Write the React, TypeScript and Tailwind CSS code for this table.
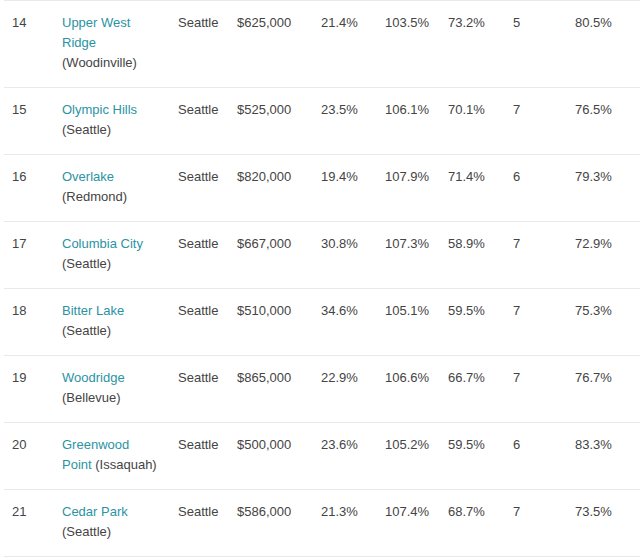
const ROWS = [
  { rank: 14, name: 'Upper West Ridge', area: 'Woodinville', city: 'Seattle', price: '$625,000', a: '21.4%', b: '103.5%', c: '73.2%', d: '5', e: '80.5%' },
  { rank: 15, name: 'Olympic Hills', area: 'Seattle', city: 'Seattle', price: '$525,000', a: '23.5%', b: '106.1%', c: '70.1%', d: '7', e: '76.5%' },
  { rank: 16, name: 'Overlake', area: 'Redmond', city: 'Seattle', price: '$820,000', a: '19.4%', b: '107.9%', c: '71.4%', d: '6', e: '79.3%' },
  { rank: 17, name: 'Columbia City', area: 'Seattle', city: 'Seattle', price: '$667,000', a: '30.8%', b: '107.3%', c: '58.9%', d: '7', e: '72.9%' },
  { rank: 18, name: 'Bitter Lake', area: 'Seattle', city: 'Seattle', price: '$510,000', a: '34.6%', b: '105.1%', c: '59.5%', d: '7', e: '75.3%' },
  { rank: 19, name: 'Woodridge', area: 'Bellevue', city: 'Seattle', price: '$865,000', a: '22.9%', b: '106.6%', c: '66.7%', d: '7', e: '76.7%' },
  { rank: 20, name: 'Greenwood Point', area: 'Issaquah', city: 'Seattle', price: '$500,000', a: '23.6%', b: '105.2%', c: '59.5%', d: '6', e: '83.3%' },
  { rank: 21, name: 'Cedar Park', area: 'Seattle', city: 'Seattle', price: '$586,000', a: '21.3%', b: '107.4%', c: '68.7%', d: '7', e: '73.5%' },
];

export default function App() {
  return (
    <div className="w-[640px] h-[558px] bg-white overflow-hidden font-['Liberation_Sans',Arial,sans-serif] text-[13px] leading-[20px] text-[#444]">
      <div className="ml-[4px] border-b border-[#e9e9e9]">
        {ROWS.map((r) => (
          <div key={r.rank} className="flex border-t border-[#e9e9e9] pl-[8px] pt-[12px] pb-[14px]">
            <div className="w-[50px]">{r.rank}</div>
            <div className="w-[116px]">
              <div className="w-[98px]">
                <span className="text-[#2b93a3]">{r.name}</span> ({r.area})
              </div>
            </div>
            <div className="w-[59px]">{r.city}</div>
            <div className="w-[84px]">{r.price}</div>
            <div className="w-[64px]">{r.a}</div>
            <div className="w-[63px]">{r.b}</div>
            <div className="w-[65px]">{r.c}</div>
            <div className="w-[62px]">{r.d}</div>
            <div className="flex-1">{r.e}</div>
          </div>
        ))}
      </div>
    </div>
  );
}
